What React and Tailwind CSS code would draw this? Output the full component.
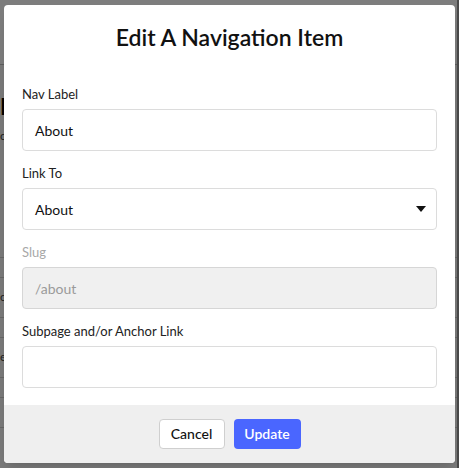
import React from 'react';

function Field({ label, children, muted }) {
  return (
    <div className="flex flex-col gap-[5px]">
      <label className={`block h-5 text-[13px] leading-5 ${muted ? 'text-[#a8a8a8]' : 'text-[#222]'}`}>
        {label}
      </label>
      {children}
    </div>
  );
}

export default function App() {
  return (
    <div
      className="relative h-[468px] w-[459px] overflow-hidden bg-[#7a7a7a]"
      style={{ fontFamily: 'Lato, "Open Sans", sans-serif' }}
    >
      {/* page behind the overlay */}
      <div className="flex h-full">
        <div className="flex-1">
          <div className="h-[65px] border-b border-[#5f5f5f] bg-[#7d7d7d]" />
          <div className="mt-[30px] text-[22px] font-bold leading-6 text-black">M</div>
          <div className="mt-2 text-[12px] text-[#222]">c</div>
          <div className="mt-[112px] border-b border-[#666]" />
          <div className="h-[20px] border-b border-[#666]" />
          <div className="h-[40px] border-b border-[#666] pt-[10px] text-[12px] text-[#222]">c</div>
          <div className="h-[20px] border-b border-[#666]" />
          <div className="h-[40px] border-b border-[#666] pt-[10px] text-[12px] text-[#222]">e</div>
          <div className="h-[20px] border-b border-[#666]" />
          <div className="h-[30px] border-b border-[#666]" />
        </div>
        <div className="w-[2px] bg-[#4a4a4a]" />
      </div>

      {/* modal */}
      <div className="absolute left-[4px] top-[5px] flex h-[458px] w-[451px] flex-col overflow-hidden rounded bg-white shadow-lg">
        <div className="flex-1 px-[18px]">
          <h2 className="pt-[16px] text-center text-[23px] font-semibold leading-8 text-[#111]">
            Edit A Navigation Item
          </h2>
          <div className="mt-[31px] flex flex-col gap-[12px]">
            <Field label="Nav Label">
              <div className="flex h-[42px] items-center rounded border border-[#dcdcdc] px-3 text-[14px] text-[#111]">
                About
              </div>
            </Field>
            <Field label="Link To">
              <div className="flex h-[42px] items-center justify-between rounded border border-[#dcdcdc] pl-3 pr-[10px] text-[14px] text-[#111]">
                <span>About</span>
                <svg width="10" height="6" viewBox="0 0 10 6">
                  <path d="M0 0h10L5 6z" fill="#111" />
                </svg>
              </div>
            </Field>
            <Field label="Slug" muted>
              <div className="flex h-[42px] items-center rounded border border-[#d6d6d6] bg-[#f0f0f0] px-3 text-[14px] text-[#9a9a9a]">
                /about
              </div>
            </Field>
            <Field label="Subpage and/or Anchor Link">
              <div className="h-[42px] rounded border border-[#dcdcdc]" />
            </Field>
          </div>
        </div>
        <div className="flex h-[58px] items-center justify-center gap-[9px] bg-[#efefef] pb-[1px]">
          <button className="h-[30px] w-[66px] rounded border border-[#cfcfcf] bg-white text-[14px] font-medium text-[#111]">
            Cancel
          </button>
          <button className="h-[30px] w-[67px] rounded bg-[#4a66ff] text-[14px] font-semibold text-white">
            Update
          </button>
        </div>
      </div>
    </div>
  );
}
